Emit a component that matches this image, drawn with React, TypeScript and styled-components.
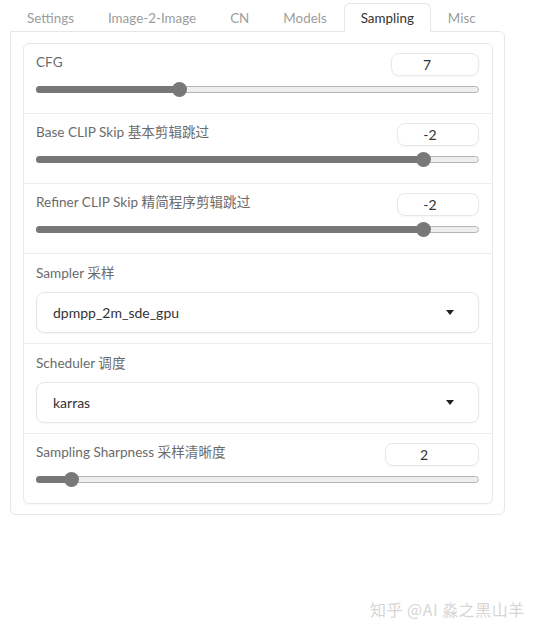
import React from "react";
import styled, { createGlobalStyle } from "styled-components";

const Global = createGlobalStyle`
  html, body { margin: 0; padding: 0; background: #ffffff; }
  body { font-family: Lato, "Noto Sans CJK SC", sans-serif; width: 537px; height: 634px; overflow: hidden; }
  * { box-sizing: border-box; }
`;

const Page = styled.div`
  position: relative;
  width: 537px;
  height: 634px;
  padding: 3px 32px 0 10px;
`;

const TabBar = styled.div`
  display: flex;
  height: 28px;
  position: relative;
  z-index: 1;
`;

const Tab = styled.div<{ $active?: boolean }>`
  display: flex;
  align-items: center;
  flex-shrink: 0;
  white-space: nowrap;
  padding: 0 16px 0 16px;
  height: ${(p) => (p.$active ? "29px" : "28px")};
  font-size: 13.4px;
  color: ${(p) => (p.$active ? "#333333" : "#9c9c9c")};
  background: #ffffff;
  border: 1px solid ${(p) => (p.$active ? "#e6e6e6" : "transparent")};
  border-bottom: none;
  border-radius: 6px 6px 0 0;
`;

const Panel = styled.div`
  border: 1px solid #e6e6e6;
  border-radius: 0 6px 6px 6px;
  padding: 11px 11px 10px 12px;
`;

const Block = styled.div`
  border: 1px solid #e8e8e8;
  border-radius: 6px;
  box-shadow: 0 1px 2px rgba(0, 0, 0, 0.04);
`;

const Row = styled.div<{ $kind: "slider" | "select" }>`
  padding: ${(p) => (p.$kind === "slider" ? "9px 13px 17px 12px" : "10px 13px 10px 12px")};
  & + & { border-top: 1px solid #ececec; }
  display: flex;
  flex-direction: column;
`;

const Header = styled.div`
  display: flex;
  justify-content: space-between;
  align-items: flex-start;
  height: 23px;
`;

const Label = styled.div`
  font-size: 13.6px;
  color: #6b6b6b;
  line-height: 19px;
`;

const NumberBox = styled.div<{ $w: number }>`
  width: ${(p) => p.$w}px;
  height: 23px;
  border: 1px solid #e8e8e8;
  border-radius: 8px;
  box-shadow: 0 1px 2px rgba(0, 0, 0, 0.04);
  display: flex;
  align-items: center;
  justify-content: center;
  padding-right: 16px;
  font-size: 14px;
  color: #333333;
`;

const SliderWrap = styled.div`
  position: relative;
  height: 14px;
  margin-top: 6px;
  display: flex;
  align-items: center;
`;

const Track = styled.div`
  position: relative;
  width: 100%;
  height: 7px;
  border: 1px solid #b5b5b5;
  background: #eeeeee;
  border-radius: 4px;
`;

const Fill = styled.div`
  position: absolute;
  left: -1px;
  top: -1px;
  bottom: -1px;
  background: #777777;
  border-radius: 4px;
`;

const Thumb = styled.div`
  position: absolute;
  top: 50%;
  width: 15px;
  height: 15px;
  margin: -7.5px 0 0 -7.5px;
  border-radius: 50%;
  background: #787878;
`;

const Select = styled.div`
  margin-top: 9px;
  height: 41px;
  border: 1px solid #e6e6e6;
  border-radius: 8px;
  box-shadow: 0 1px 2px rgba(0, 0, 0, 0.04);
  display: flex;
  align-items: center;
  justify-content: space-between;
  padding: 0 24px 0 16px;
  font-size: 14px;
  color: #333333;
`;

const Caret = styled.div`
  width: 0;
  height: 0;
  border-left: 4px solid transparent;
  border-right: 4px solid transparent;
  border-top: 5px solid #222222;
`;

const Watermark = styled.div`
  position: absolute;
  left: 370px;
  top: 597px;
  font-size: 16px;
  color: #d6d6d6;
  font-family: "Noto Sans CJK SC", sans-serif;
  letter-spacing: 0.5px;
`;

type SliderProps = { label: string; value: string; pct: number; w: number };

const SliderRow = ({ label, value, pct, w }: SliderProps) => (
  <Row $kind="slider">
    <Header>
      <Label>{label}</Label>
      <NumberBox $w={w}>{value}</NumberBox>
    </Header>
    <SliderWrap>
      <Track>
        <Fill style={{ width: `${pct}%` }} />
        <Thumb style={{ left: `${pct}%` }} />
      </Track>
    </SliderWrap>
  </Row>
);

const SelectRow = ({ label, value }: { label: string; value: string }) => (
  <Row $kind="select">
    <Label>{label}</Label>
    <Select>
      <span>{value}</span>
      <Caret />
    </Select>
  </Row>
);

const tabs = ["Settings", "Image-2-Image", "CN", "Models", "Sampling", "Misc"];

export default function App() {
  return (
    <Page>
      <Global />
      <TabBar>
        {tabs.map((t) => (
          <Tab key={t} $active={t === "Sampling"}>
            {t}
          </Tab>
        ))}
      </TabBar>
      <Panel>
        <Block>
          <SliderRow label="CFG" value="7" pct={32.3} w={88} />
          <SliderRow label="Base CLIP Skip 基本剪辑跳过" value="-2" pct={87.6} w={82} />
          <SliderRow label="Refiner CLIP Skip 精简程序剪辑跳过" value="-2" pct={87.6} w={82} />
          <SelectRow label="Sampler 采样" value="dpmpp_2m_sde_gpu" />
          <SelectRow label="Scheduler 调度" value="karras" />
          <SliderRow label="Sampling Sharpness 采样清晰度" value="2" pct={7.9} w={94} />
        </Block>
      </Panel>
      <Watermark>知乎 @AI 淼之黑山羊</Watermark>
    </Page>
  );
}
